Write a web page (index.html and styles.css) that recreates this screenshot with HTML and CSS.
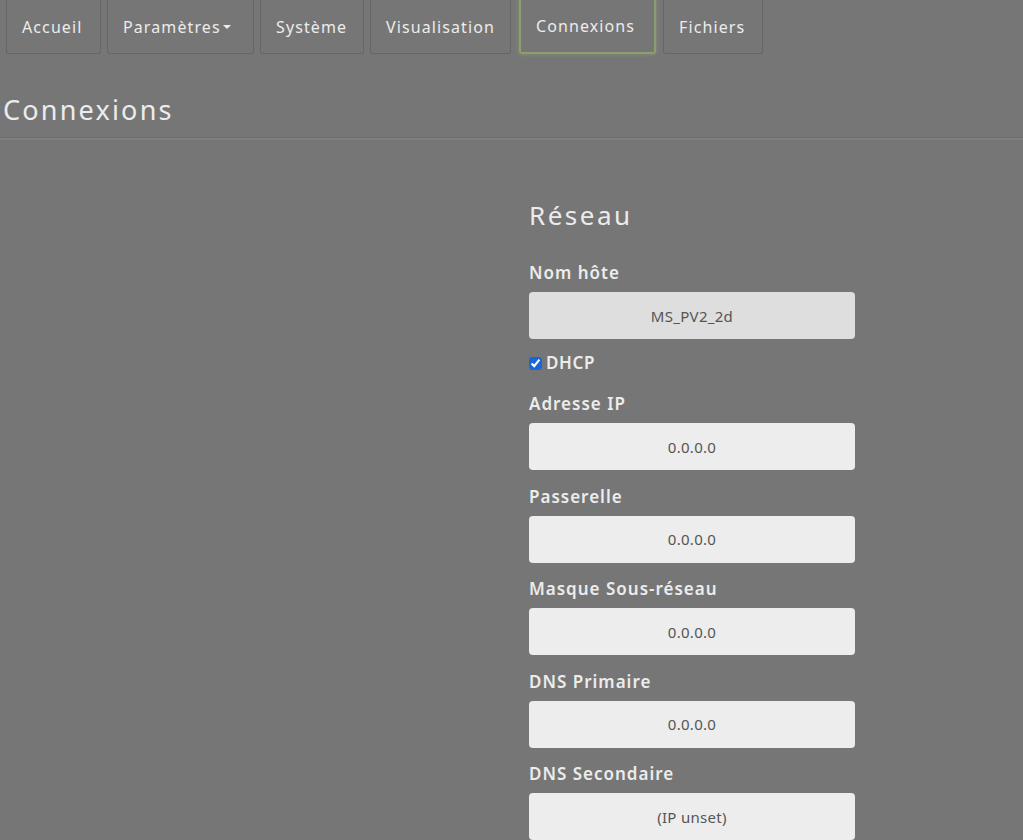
FILE: index.html
```html
<!DOCTYPE html>
<html lang="fr">
<head>
<meta charset="utf-8">
<title>Connexions</title>
<link rel="stylesheet" href="styles.css">
</head>
<body>
<nav class="tabs">
  <a class="tab">Accueil</a>
  <a class="tab">Paramètres<span class="caret"></span></a>
  <a class="tab">Système</a>
  <a class="tab">Visualisation</a>
  <a class="tab active">Connexions</a>
  <a class="tab">Fichiers</a>
</nav>
<h1 class="page-title">Connexions</h1>
<main class="content">
  <form class="net-form">
    <h2 class="section-title">Réseau</h2>
    <label class="field-label">Nom hôte</label>
    <input class="field field-host" type="text" value="MS_PV2_2d">
    <label class="check"><input type="checkbox" checked> DHCP</label>
    <label class="field-label">Adresse IP</label>
    <input class="field" type="text" value="0.0.0.0">
    <label class="field-label">Passerelle</label>
    <input class="field" type="text" value="0.0.0.0">
    <label class="field-label">Masque Sous-réseau</label>
    <input class="field" type="text" value="0.0.0.0">
    <label class="field-label">DNS Primaire</label>
    <input class="field" type="text" value="0.0.0.0">
    <label class="field-label">DNS Secondaire</label>
    <input class="field" type="text" value="(IP unset)">
  </form>
</main>
</body>
</html>
```
FILE: styles.css
```css
html, body {
  margin: 0;
  padding: 0;
  background: #767676;
  font-family: "Noto Sans", "Lato", sans-serif;
  color: #ececec;
  overflow: hidden;
  height: 840px;
}

.tabs {
  display: flex;
  gap: 6px;
  padding: 0 6px;
  height: 55px;
}

.tab {
  display: flex;
  align-items: center;
  box-sizing: border-box;
  height: 54px;
  padding: 0 15px;
  border: 1px solid #666;
  border-top: none;
  border-radius: 0 0 3px 3px;
  font-size: 16px;
  color: #ececec;
  letter-spacing: 1.1px;
  white-space: nowrap;
}

.tab:nth-child(1) { width: 95px; }
.tab:nth-child(2) { width: 147px; }
.tab:nth-child(3) { width: 104px; }
.tab:nth-child(4) { width: 141px; }
.tab:nth-child(5) { width: 137px; margin-left: 2px; }
.tab:nth-child(6) { width: 100px; margin-left: 1px; }

.tab.active {
  border: 2px solid #8b9e6c;
  border-top: none;
  box-shadow: 0 0 4px rgba(160, 190, 110, 0.45);
}

.caret {
  display: inline-block;
  width: 0;
  height: 0;
  margin-left: 2px;
  border-left: 4px solid transparent;
  border-right: 4px solid transparent;
  border-top: 4px solid #ececec;
}

.page-title {
  margin: 0;
  padding: 37px 0 0 3px;
  height: 45px;
  font-size: 27px;
  line-height: 36px;
  font-weight: 400;
  color: #ececec;
  letter-spacing: 2.2px;
  border-bottom: 1px solid #6c6c6c;
}

.content {
  border-top: 2px solid #808080;
  display: flex;
  justify-content: flex-start;
  padding-left: 529px;
}

.net-form {
  display: flex;
  flex-direction: column;
  width: 326px;
  padding-top: 58px;
}

.section-title {
  margin: 0 0 30px 0;
  font-size: 26px;
  font-weight: 400;
  line-height: 34px;
  letter-spacing: 2.5px;
  color: #ececec;
}

.field-label {
  font-size: 17px;
  font-weight: 600;
  line-height: 22px;
  letter-spacing: 1px;
  margin-bottom: 8px;
  color: #ececec;
}

.field {
  box-sizing: border-box;
  height: 47px;
  width: 326px;
  border: none;
  border-radius: 4px;
  background: #ededed;
  color: #555;
  text-align: center;
  font-family: "Noto Sans", "Lato", sans-serif;
  font-size: 15px;
  letter-spacing: 0.3px;
  margin-bottom: 15.5px;
  padding: 0;
}

.field-host {
  background: #dedede;
  margin-bottom: 13px;
}

.check {
  display: flex;
  align-items: center;
  gap: 4px;
  font-size: 17px;
  font-weight: 600;
  line-height: 22px;
  letter-spacing: 0.6px;
  margin-bottom: 19px;
}

.check input {
  margin: 0;
  width: 13px;
  height: 13px;
  accent-color: #1a66d6;
}
```
